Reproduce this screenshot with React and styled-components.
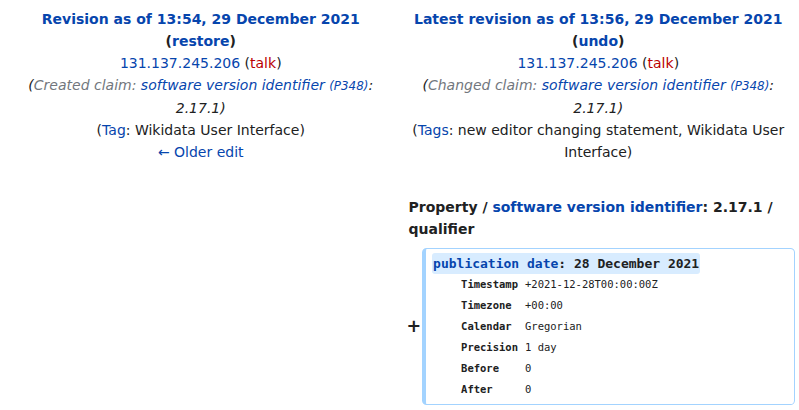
import styled, { createGlobalStyle } from "styled-components";

const GlobalStyle = createGlobalStyle`
  body {
    margin: 0;
    background: #ffffff;
    font-family: "DejaVu Sans", sans-serif;
    font-size: 14px;
    line-height: 22px;
    color: #202122;
  }
`;

const fields = [
  ["Timestamp", "+2021-12-28T00:00:00Z"],
  ["Timezone", "+00:00"],
  ["Calendar", "Gregorian"],
  ["Precision", "1 day"],
  ["Before", "0"],
  ["After", "0"],
];

export default function App() {
  return (
    <>
      <GlobalStyle />
      <DiffTable>
        <Header side="left">
          <Title>
            <Link href="#">Revision as of 13:54, 29 December 2021</Link>
          </Title>
          <Title>
            (<Link href="#">restore</Link>)
          </Title>
          <div>
            <Link href="#">131.137.245.206</Link> (<RedLink href="#">talk</RedLink>)
          </div>
          <Comment>
            (<Auto>Created claim: </Auto>
            <Link href="#">software version identifier</Link> <ItemId>(P348)</ItemId>: 2.17.1)
          </Comment>
          <div>
            (<Link href="#">Tag</Link>: Wikidata User Interface)
          </div>
          <div>
            <Link href="#">← Older edit</Link>
          </div>
        </Header>
        <Header side="right">
          <Title>
            <Link href="#">Latest revision as of 13:56, 29 December 2021</Link>
          </Title>
          <Title>
            (<Link href="#">undo</Link>)
          </Title>
          <div>
            <Link href="#">131.137.245.206</Link> (<RedLink href="#">talk</RedLink>)
          </div>
          <Comment>
            (<Auto>Changed claim: </Auto>
            <Link href="#">software version identifier</Link> <ItemId>(P348)</ItemId>: 2.17.1)
          </Comment>
          <div>
            (<Link href="#">Tags</Link>: new editor changing statement, Wikidata User Interface)
          </div>
        </Header>

        <LineNo>
          Property / <Link href="#">software version identifier</Link>: 2.17.1 / qualifier
        </LineNo>

        <Marker>+</Marker>
        <AddedLine>
          <Change>
            <Link href="#">publication date</Link>: 28 December 2021
          </Change>
          <Fields>
            {fields.map(([label, value]) => (
              <Field key={label}>
                <FieldLabel>{label}</FieldLabel>
                <FieldValue>{value}</FieldValue>
              </Field>
            ))}
          </Fields>
        </AddedLine>
      </DiffTable>
    </>
  );
}

const DiffTable = styled.div`
  display: grid;
  grid-template-columns: 2fr 48fr 2fr 48fr;
  column-gap: 4px;
  row-gap: 4px;
  padding: 0 4px;
`;

const Header = styled.div`
  grid-column: ${(props) => (props.side === "left" ? "1 / 3" : "3 / 5")};
  grid-row: 1;
  padding: 8px 7px 4px;
  text-align: center;
`;

const Title = styled.div`
  font-weight: 700;
`;

const Link = styled.a`
  color: #0645ad;
  text-decoration: none;
`;

const RedLink = styled.a`
  color: #ba0000;
  text-decoration: none;
`;

const Comment = styled.div`
  font-style: italic;
`;

const Auto = styled.span`
  color: #72777d;
`;

const ItemId = styled.span`
  font-size: 0.85em;
  color: #0645ad;
`;

const LineNo = styled.div`
  grid-column: 3 / 5;
  grid-row: 2;
  margin-top: 25px;
  padding: 0 7px 4px 7px;
  font-weight: 700;
`;

const Marker = styled.div`
  grid-column: 3;
  grid-row: 3;
  align-self: center;
  text-align: right;
  margin-right: -4px;
  font-size: 17.5px;
  font-weight: 700;
  line-height: 21px;
`;

const AddedLine = styled.div`
  grid-column: 4;
  grid-row: 3;
  margin-left: 1px;
  border: 1px solid #a3d3ff;
  border-left-width: 4px;
  border-radius: 4.6px;
  padding: 3px 7px 4px 6px;
  font-family: "DejaVu Sans Mono", monospace;
`;

const Change = styled.span`
  display: inline-block;
  height: 21px;
  line-height: 21px;
  padding: 0 1px;
  border-radius: 3px;
  background: #d8ecff;
  font-size: 13px;
  font-weight: 700;
`;

const Fields = styled.div`
  display: grid;
  grid-template-columns: auto 1fr;
  column-gap: 7px;
  padding-left: 29px;
  font-size: 10.5px;
`;

const Field = styled.div`
  display: contents;
`;

const FieldLabel = styled.div`
  line-height: 21px;
  font-weight: 700;
`;

const FieldValue = styled.div`
  line-height: 21px;
`;
